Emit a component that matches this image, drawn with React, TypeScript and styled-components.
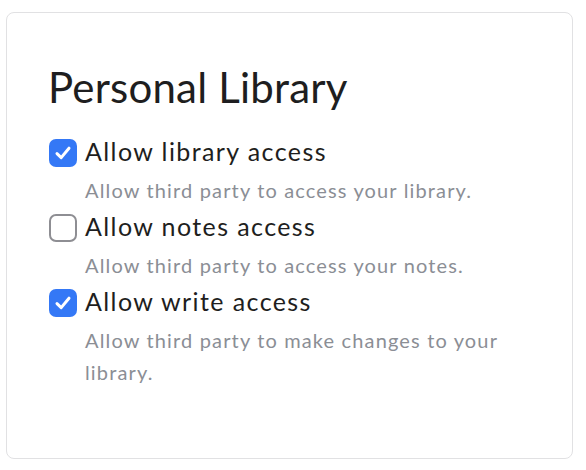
import { useState } from 'react';
import styled, { createGlobalStyle } from 'styled-components';

const GlobalStyle = createGlobalStyle`
  body {
    margin: 0;
    background: #ffffff;
    font-family: Lato, "Noto Sans", sans-serif;
  }
`;

type Option = {
  id: string;
  label: string;
  hint: string;
  checked: boolean;
};

const initialOptions: Option[] = [
  { id: 'library', label: 'Allow library access', hint: 'Allow third party to access your library.', checked: true },
  { id: 'notes', label: 'Allow notes access', hint: 'Allow third party to access your notes.', checked: false },
  { id: 'write', label: 'Allow write access', hint: 'Allow third party to make changes to your library.', checked: true },
];

const CheckIcon = () => (
  <svg width="22" height="22" viewBox="0 0 22 22" fill="none">
    <path d="M5 11.6 L9.2 15.6 L17 6.2" stroke="#fff" strokeWidth="3" strokeLinecap="round" strokeLinejoin="round" />
  </svg>
);

const App = () => {
  const [options, setOptions] = useState<Option[]>(initialOptions);

  const toggle = (id: string) => {
    setOptions(options.map((o) => (o.id === id ? { ...o, checked: !o.checked } : o)));
  };

  return (
    <>
      <GlobalStyle />
      <Card>
        <Title>Personal Library</Title>
        <List>
          {options.map((o) => (
            <Item key={o.id}>
              <Row onClick={() => toggle(o.id)}>
                <Box $checked={o.checked}>{o.checked && <CheckIcon />}</Box>
                <Label>{o.label}</Label>
              </Row>
              <Hint>{o.hint}</Hint>
            </Item>
          ))}
        </List>
      </Card>
    </>
  );
};

const Card = styled.div`
  box-sizing: border-box;
  margin: 12px 13px 0 6px;
  height: 447px;
  border: 1px solid #e1e1e3;
  border-radius: 8px;
  padding: 50px 60px 0 42px;
`;

const Title = styled.h1`
  margin: 0 0 23px -1px;
  font-size: 42px;
  line-height: 48px;
  font-weight: 400;
  letter-spacing: 0.2px;
  color: #1e1e20;
`;

const List = styled.div`
  display: flex;
  flex-direction: column;
  gap: 3px;
`;

const Item = styled.div`
  display: flex;
  flex-direction: column;
`;

const Row = styled.label`
  display: flex;
  align-items: center;
  gap: 8px;
  height: 38px;
  cursor: pointer;
`;

const Box = styled.span<{ $checked: boolean }>`
  box-sizing: border-box;
  flex: none;
  width: 28px;
  height: 28px;
  border-radius: 7px;
  display: flex;
  align-items: center;
  justify-content: center;
  background: ${(p) => (p.$checked ? '#3478f6' : '#ffffff')};
  border: ${(p) => (p.$checked ? 'none' : '2.5px solid #8e8e93')};
`;

const Label = styled.span`
  font-size: 25px;
  line-height: 30px;
  padding-bottom: 4px;
  letter-spacing: 1.4px;
  color: #1e1e20;
`;

const Hint = styled.p`
  margin: 2px 0 0 36px;
  font-size: 20px;
  line-height: 32px;
  letter-spacing: 1.15px;
  color: #8b8e95;
`;

export default App;
